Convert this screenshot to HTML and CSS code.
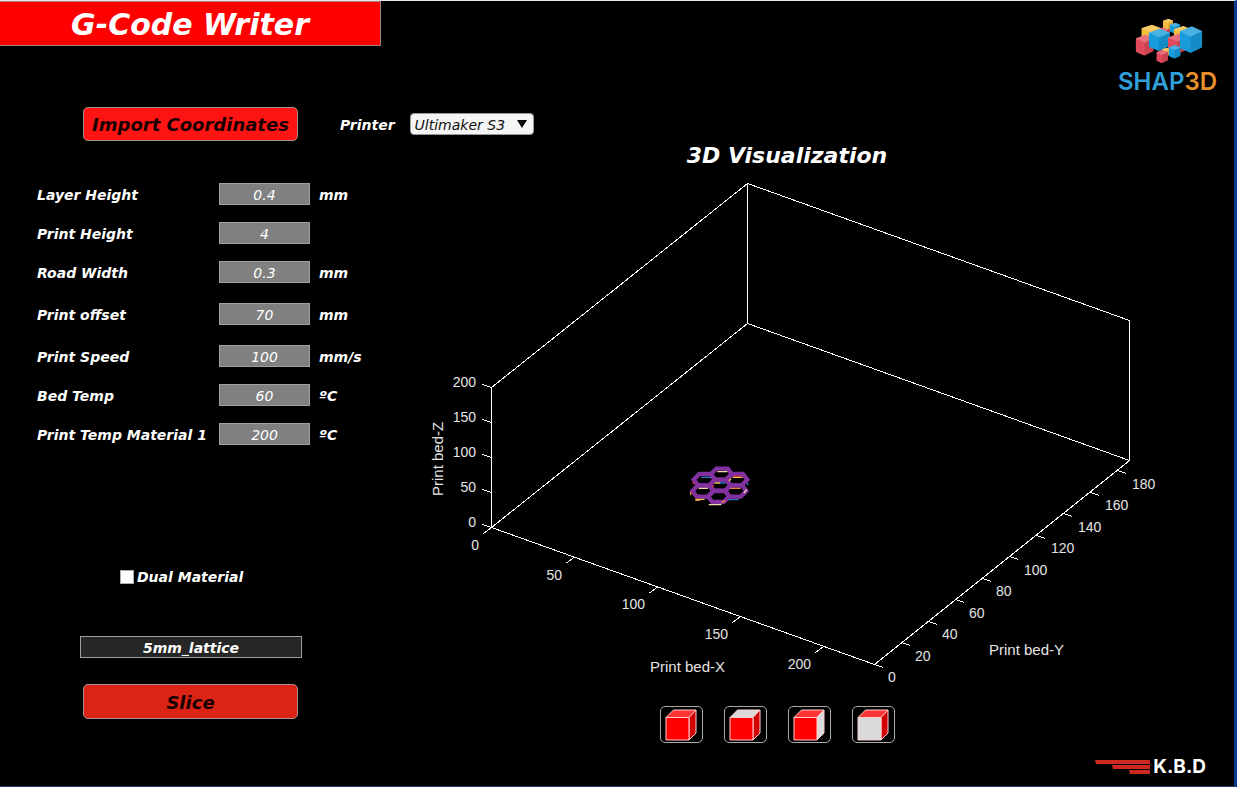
FILE: index.html
```html
<!DOCTYPE html>
<html lang="en">
<head>
<meta charset="utf-8">
<title>G-Code Writer</title>
<link rel="stylesheet" href="styles.css">
</head>
<body>
<div class="window">
  <header class="header">
    <h1 class="title">G-Code Writer</h1>
    <svg class="brand" viewBox="1112 16 114 84" role="img" aria-label="SHAP3D">
      <defs>
        <symbol id="cube" viewBox="0 0 60 64" preserveAspectRatio="none">
          <path d="M0 12 32 0 60 12 60 50 29 64 0 52Z" fill="currentColor"/>
          <path d="M0 12 32 0 60 12 29 25Z" fill="#fff" opacity=".22"/>
          <path d="M29 25 60 12 60 50 29 64Z" fill="#000" opacity=".1"/>
        </symbol>
      </defs>
      <g transform="translate(1100 0) scale(.3333)">
        <use class="yellow" href="#cube" x="124" y="74" width="60" height="56"/>
        <use class="red" href="#cube" x="176" y="80" width="34" height="36"/>
        <use class="yellow" href="#cube" x="189" y="56" width="31" height="32"/>
        <use class="blue" href="#cube" x="210" y="68" width="31" height="33"/>
        <use class="yellow" href="#cube" x="221" y="78" width="54" height="52"/>
        <use class="red" href="#cube" x="107" y="104" width="54" height="63"/>
        <use class="blue" href="#cube" x="146" y="86" width="64" height="67"/>
        <use class="red" href="#cube" x="204" y="101" width="58" height="61"/>
        <use class="blue" href="#cube" x="239" y="79" width="68" height="80"/>
        <use class="yellow" href="#cube" x="186" y="143" width="26" height="26"/>
        <use class="red" href="#cube" x="169" y="149" width="35" height="41"/>
        <use class="blue" href="#cube" x="206" y="135" width="36" height="41"/>
      </g>
      <text class="brand-text" x="1118" y="90">SHAP<tspan class="brand-accent">3D</tspan></text>
    </svg>
  </header>

  <div class="toolbar">
    <button class="action import" type="button">Import Coordinates</button>
    <label class="printer-label" for="printer">Printer</label>
    <span class="select-wrap">
      <select class="select" id="printer"><option>Ultimaker S3</option></select>
      <svg class="arrow" viewBox="0 0 10 8" aria-hidden="true"><path d="M0 0H10L5 8Z"/></svg>
    </span>
  </div>

  <main class="main">
    <form class="settings">
      <div class="rows">
        <div class="row"><label for="layer">Layer Height</label><input id="layer" class="field" value="0.4"><span>mm</span></div>
        <div class="row"><label for="height">Print Height</label><input id="height" class="field" value="4"></div>
        <div class="row"><label for="road">Road Width</label><input id="road" class="field" value="0.3"><span>mm</span></div>
        <div class="row roomy"><label for="offset">Print offset</label><input id="offset" class="field" value="70"><span>mm</span></div>
        <div class="row roomy"><label for="speed">Print Speed</label><input id="speed" class="field" value="100"><span>mm/s</span></div>
        <div class="row"><label for="bed">Bed Temp</label><input id="bed" class="field" value="60"><span>ºC</span></div>
        <div class="row"><label for="temp">Print Temp Material 1</label><input id="temp" class="field" value="200"><span>ºC</span></div>
      </div>
      <label class="dual"><input class="check" type="checkbox">Dual Material</label>
      <div class="output">
        <input class="filename" value="5mm_lattice" aria-label="Output file name">
        <button class="action slice" type="button">Slice</button>
      </div>
    </form>

    <section class="visual">
      <h2 class="heading">3D Visualization</h2>
      <svg class="plot" viewBox="415 178 744 510" role="img" aria-label="Print bed plot">
        <g class="axes">
          <path d="M747.5 183.5 1129.5 320.5V460.5L747.5 323.5ZM747.5 183.5 491.5 387.5V527.5L747.5 323.5M491.5 527.5 874.5 664.5 1129.5 460.5"/>
          <path d="M491.5 387.5l-9-3M491.5 422.5l-9-3M491.5 457.5l-9-3M491.5 492.5l-9-3M491.5 527.5l-9-3"/>
          <path d="M491.5 527.5l-8 6M574.5 557l-8 6M657.5 587l-8 6M740.5 616.5l-8 6M823.5 646.5l-8 6"/>
          <path d="M874.5 664.5l9 3M901.5 642.5l9 3M928.5 621.5l9 3M955.5 599.5l9 3M982.5 578.5l9 3M1009.5 556.5l9 3M1036.5 535.5l9 3M1063.5 513.5l9 3M1090.5 492.5l9 3M1117.5 470.5l9 3"/>
        </g>
        <g class="tick end">
          <text x="476" y="387">200</text><text x="476" y="422">150</text><text x="476" y="457">100</text><text x="476" y="492">50</text><text x="476" y="527">0</text>
          <text x="479" y="550">0</text><text x="562" y="580">50</text><text x="645" y="609">100</text><text x="728" y="639">150</text><text x="811" y="669">200</text>
        </g>
        <g class="tick">
          <text x="888" y="682">0</text><text x="915" y="661">20</text><text x="942" y="639">40</text><text x="969" y="618">60</text><text x="996" y="596">80</text><text x="1024" y="575">100</text><text x="1051" y="553">120</text><text x="1078" y="532">140</text><text x="1105" y="510">160</text><text x="1132" y="489">180</text>
        </g>
        <g class="axis-name">
          <text x="650" y="672">Print bed-X</text>
          <text x="989" y="655">Print bed-Y</text>
          <text transform="translate(443 496) rotate(-90)">Print bed-Z</text>
        </g>
        <g transform="translate(670 450) scale(.3333)">
          <g fill="none" stroke="#8331a0" stroke-width="13" transform="translate(0 2)">
            <path id="cell" d="M169 87 182 104 165 121 131 121 118 104 135 87Z"/>
            <use href="#cell" x="4" y="-33"/><use href="#cell" x="50" y="-17"/><use href="#cell" x="47" y="17"/>
            <use href="#cell" x="-4" y="33"/><use href="#cell" x="-51" y="17"/><use href="#cell" x="-47" y="-17"/>
          </g>
          <g fill="none" stroke-width="4">
            <path stroke="#f3d9b0" d="M142 65H172M86 115H114M116 164H154M222 129L230 118"/>
            <path stroke="#2878c8" d="M94 82H122M174 149H206M150 99H166M232 106L234 98"/>
            <path stroke="#f2c94c" d="M188 82H218M76 148H104M134 99H150M177 93L183 86"/>
            <path stroke="#e8873a" d="M180 115H212M76 151H90M62 126V136M154 158L166 152"/>
            <path stroke="#d83a3a" d="M190 79H212M126 112L132 106M70 96V103"/>
          </g>
        </g>
      </svg>
      <div class="views">
        <button class="view" type="button" aria-label="Isometric view"><svg class="cube" viewBox="0 0 32 32"><path class="top" d="M1 8.500 8.500 1H31L24 8.500Z"/><path class="side" d="M24 8.500 31 1V24L24 31Z"/><path class="front" d="M1 8.500H24V31H1Z"/></svg></button>
        <button class="view top-view" type="button" aria-label="Top view"><svg class="cube" viewBox="0 0 32 32"><path class="top" d="M1 8.500 8.500 1H31L24 8.500Z"/><path class="side" d="M24 8.500 31 1V24L24 31Z"/><path class="front" d="M1 8.500H24V31H1Z"/></svg></button>
        <button class="view side-view" type="button" aria-label="Side view"><svg class="cube" viewBox="0 0 32 32"><path class="top" d="M1 8.500 8.500 1H31L24 8.500Z"/><path class="side" d="M24 8.500 31 1V24L24 31Z"/><path class="front" d="M1 8.500H24V31H1Z"/></svg></button>
        <button class="view front-view" type="button" aria-label="Front view"><svg class="cube" viewBox="0 0 32 32"><path class="top" d="M1 8.500 8.500 1H31L24 8.500Z"/><path class="side" d="M24 8.500 31 1V24L24 31Z"/><path class="front" d="M1 8.500H24V31H1Z"/></svg></button>
      </div>
    </section>
  </main>

  <footer class="footer">
    <svg class="stripes" viewBox="0 0 55 14" aria-hidden="true"><path d="M0 0H55V4H1ZM17 5H55V9H18ZM34 10H55V14H35Z"/></svg>
    <span class="kbd">K.B.D</span>
  </footer>
</div>
</body>
</html>
```
FILE: styles.css
```css
* {
  box-sizing: border-box;
}

body {
  margin: 0;
  background: #000;
  color: #fff;
  font: italic bold 14px/24px Verdana, "DejaVu Sans", sans-serif;
}

.window {
  display: flex;
  flex-direction: column;
  min-height: 100vh;
  border-top: 1px solid #e8e8e8;
  border-right: 3px solid #0b3a8f;
  border-bottom: 1px solid #1c3468;
}

.header {
  display: flex;
  justify-content: space-between;
  align-items: flex-start;
  height: 106px;
}

.title {
  width: 381px;
  height: 45px;
  margin: 0;
  border: 1px solid #a08080;
  border-left: 0;
  background: #f00;
  font-size: 30px;
  line-height: 45px;
  text-align: center;
}

.brand {
  width: 114px;
  height: 84px;
  margin: 15px 8px 0 0;
  overflow: visible;
}

.yellow { color: #f4bd3c; }
.red { color: #e04a5c; }
.blue { color: #189cdc; }

.brand-text {
  fill: #2f9fd8;
  font: 600 24px Inter, sans-serif;
}

.brand-accent {
  fill: #e8902c;
}

.action {
  width: 215px;
  height: 34px;
  padding: 2px 0 0;
  border: 1px solid #a89090;
  border-radius: 5px;
  color: #180000;
  font: inherit;
  font-size: 18px;
}

.import {
  background: #ff1414;
}

.slice {
  height: 35px;
  margin-left: 3px;
  background: #dc2416;
}

.toolbar {
  display: flex;
  align-items: center;
  padding-left: 83px;
}

.printer-label {
  margin: 0 15px 0 42px;
  padding-top: 2px;
}

.select-wrap {
  position: relative;
  display: flex;
}

.select {
  appearance: none;
  width: 124px;
  height: 22px;
  padding: 2px 4px 0;
  border: 1px solid #999;
  border-radius: 4px;
  background: #f5f5f5;
  color: #111;
  font: inherit;
  font-weight: normal;
  line-height: 18px;
}

.arrow {
  position: absolute;
  top: 7px;
  right: 7px;
  width: 10px;
  height: 8px;
  pointer-events: none;
}

.main {
  display: flex;
}

.settings {
  width: 415px;
  flex: none;
  padding-top: 42px;
}

.rows {
  padding-left: 37px;
}

.row {
  display: grid;
  grid-template-columns: 173px 91px auto;
  gap: 9px;
  height: 22px;
  margin-bottom: 17px;
  white-space: nowrap;
}

.row.roomy {
  margin-top: 20px;
}

.field,
.filename {
  width: 100%;
  height: 22px;
  padding: 2px 0 0;
  border: 1px solid #a0a0a0;
  background: #808080;
  color: #fff;
  font: inherit;
  font-weight: normal;
  line-height: 18px;
  text-align: center;
}

.dual {
  display: flex;
  align-items: center;
  gap: 3px;
  margin: 120px 0 0 120px;
}

.check {
  appearance: none;
  width: 14px;
  height: 14px;
  margin: 0;
  border: 1px solid #aaa;
  background: #fff;
}

.output {
  display: flex;
  flex-direction: column;
  align-items: flex-start;
  gap: 26px;
  width: 222px;
  margin: 47px 0 0 80px;
}

.filename {
  background: #262626;
  font-weight: bold;
}

.visual {
  flex: 1;
  min-width: 0;
  padding-right: 75px;
}

.heading {
  margin: 4px 0 11px;
  font-size: 22px;
  line-height: 22px;
  text-align: center;
}

.plot {
  display: block;
  width: 100%;
  overflow: visible;
}

.axes {
  fill: none;
  stroke: #fff;
  stroke-width: 1;
  shape-rendering: crispEdges;
}

.tick,
.axis-name {
  fill: #e4e4e4;
  font: 14px "Liberation Sans", Arial, sans-serif;
}

.axis-name {
  font-size: 15px;
}

.end {
  text-anchor: end;
}

.views {
  display: flex;
  justify-content: center;
  gap: 21px;
  padding: 18px 20px 0 0;
}

.view {
  display: flex;
  align-items: center;
  justify-content: center;
  width: 43px;
  height: 37px;
  padding: 0;
  border: 1px solid #aaa;
  border-radius: 5px;
  background: #000;
}

.cube {
  width: 32px;
  height: 32px;
  stroke: #ffd0d0;
  stroke-width: 1;
}

.top { fill: #ff3434; }
.side { fill: #d00000; }
.front { fill: #f00; }

.top-view .top,
.side-view .side,
.front-view .front {
  fill: #dadada;
}

.footer {
  display: flex;
  justify-content: flex-end;
  align-items: center;
  gap: 3px;
  padding: 13px 28px 0 0;
}

.stripes {
  width: 55px;
  height: 14px;
  fill: #cc2a20;
}

.kbd {
  font: bold 19px/22px Inter, sans-serif;
}
```
